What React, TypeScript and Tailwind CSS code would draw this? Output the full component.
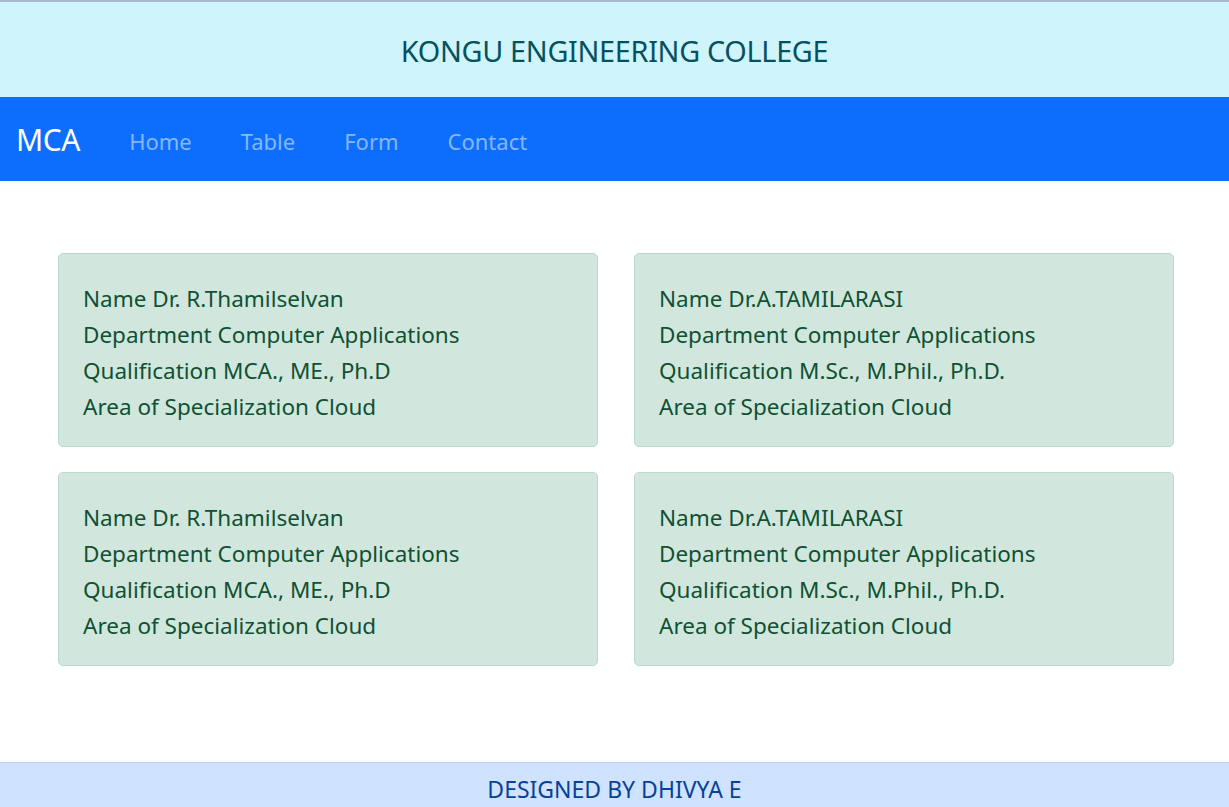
const faculty = [
  { name: "Dr. R.Thamilselvan", dept: "Computer Applications", qual: "MCA., ME., Ph.D", area: "Cloud" },
  { name: "Dr.A.TAMILARASI", dept: "Computer Applications", qual: "M.Sc., M.Phil., Ph.D.", area: "Cloud" },
  { name: "Dr. R.Thamilselvan", dept: "Computer Applications", qual: "MCA., ME., Ph.D", area: "Cloud" },
  { name: "Dr.A.TAMILARASI", dept: "Computer Applications", qual: "M.Sc., M.Phil., Ph.D.", area: "Cloud" },
];

const App = () => {
  return (
    <div className="min-h-screen bg-white font-['Noto_Sans',sans-serif]">
      {/* Header */}
      <header className="h-[97px] bg-[#cff4fc] border-t-2 border-[#a9b8cc] flex items-center justify-center pt-[3px]">
        <h1 className="text-[28.8px] text-[#055160] tracking-[-0.3px]">KONGU ENGINEERING COLLEGE</h1>
      </header>

      {/* Nav */}
      <nav className="h-[84px] bg-[#0d6efd] flex items-center gap-[49px] px-4">
        <span className="text-[30px] text-white tracking-[-0.4px]">MCA</span>
        <ul className="flex gap-[49px] text-[22px] text-[#86b7fe] pt-[4px]">
          <li>Home</li>
          <li>Table</li>
          <li>Form</li>
          <li>Contact</li>
        </ul>
      </nav>

      {/* Cards */}
      <main className="pl-[58px] pr-[55px] pt-[72px] h-[581px]">
        <div className="grid grid-cols-2 gap-x-[36px] gap-y-[25px]">
          {faculty.map((f, i) => (
            <div
              key={i}
              className="h-[194px] bg-[#d1e7dd] border border-[#badbcc] rounded-[5px] text-[#0f5132] text-[22.5px] leading-[36px] px-[24px] pt-[27px]"
            >
              <p>Name {f.name}</p>
              <p>Department {f.dept}</p>
              <p>Qualification {f.qual}</p>
              <p>Area of Specialization {f.area}</p>
            </div>
          ))}
        </div>
      </main>

      {/* Footer */}
      <footer className="h-[45px] bg-[#cfe2ff] border-t border-[#b6d4fe] flex items-center justify-center pt-[9px]">
        <p className="text-[23px] text-[#084298]">DESIGNED BY DHIVYA E</p>
      </footer>
    </div>
  );
};

export default App;
